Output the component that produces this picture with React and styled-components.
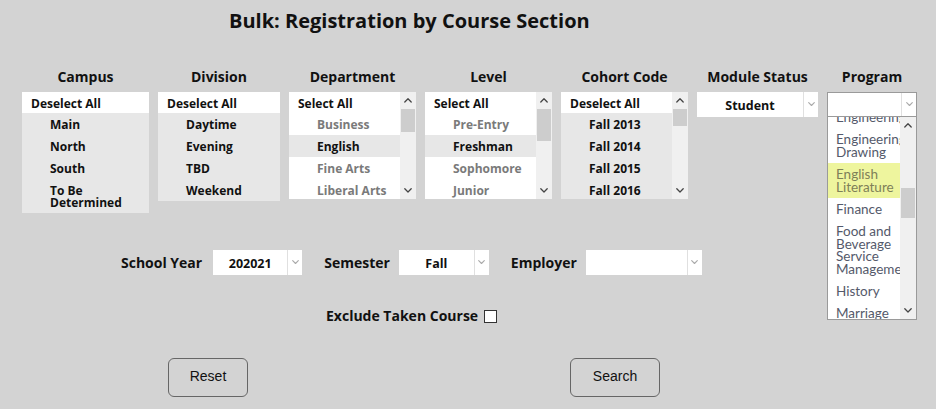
import React from "react";
import styled, { createGlobalStyle } from "styled-components";

const GlobalStyle = createGlobalStyle`
  body {
    margin: 0;
    background: #d3d3d3;
    font-family: "Open Sans", "Lato", sans-serif;
    color: #111;
  }
`;

const columns = [
  {
    title: "Campus",
    width: 127,
    tone: "gray",
    head: "Deselect All",
    items: [{ label: "Main" }, { label: "North" }, { label: "South" }, { label: "To Be Determined" }],
  },
  {
    title: "Division",
    width: 122,
    tone: "gray",
    head: "Deselect All",
    items: [{ label: "Daytime" }, { label: "Evening" }, { label: "TBD" }, { label: "Weekend" }],
  },
  {
    title: "Department",
    width: 127,
    tone: "white",
    head: "Select All",
    thumb: [17, 23],
    items: [
      { label: "Business", muted: true },
      { label: "English", selected: true },
      { label: "Fine Arts", muted: true },
      { label: "Liberal Arts", muted: true },
    ],
  },
  {
    title: "Level",
    width: 127,
    tone: "white",
    head: "Select All",
    thumb: [17, 32],
    items: [
      { label: "Pre-Entry", muted: true },
      { label: "Freshman", selected: true },
      { label: "Sophomore", muted: true },
      { label: "Junior", muted: true },
    ],
  },
  {
    title: "Cohort Code",
    width: 127,
    tone: "gray",
    head: "Deselect All",
    thumb: [17, 17],
    items: [{ label: "Fall 2013" }, { label: "Fall 2014" }, { label: "Fall 2015" }, { label: "Fall 2016" }],
  },
];

const programs = [
  "Engineering",
  "Engineering Drawing",
  "English Literature",
  "Finance",
  "Food and Beverage Service Management",
  "History",
  "Marriage and Family",
];

const Chevron = ({ up, color = "#aaa", size = 7 }) => (
  <svg width={size} height={size * 0.6} viewBox="0 0 10 6" fill="none">
    <path
      d={up ? "M1 5 L5 1 L9 5" : "M1 1 L5 5 L9 1"}
      stroke={color}
      strokeWidth="1.6"
      strokeLinecap="round"
      strokeLinejoin="round"
    />
  </svg>
);

const ScrollBar = ({ thumb, height }) => (
  <Track style={{ height }}>
    <ArrowCell>
      <Chevron up color="#444" size={8} />
    </ArrowCell>
    <Thumb style={{ marginTop: thumb[0] - 17, height: thumb[1] }} />
    <Spacer />
    <ArrowCell>
      <Chevron color="#444" size={8} />
    </ArrowCell>
  </Track>
);

const Select = ({ value, width, bordered }) => (
  <SelectBox $width={width} $bordered={bordered}>
    <SelectValue>{value}</SelectValue>
    <SelectArrow>
      <Chevron />
    </SelectArrow>
  </SelectBox>
);

const App = () => {
  return (
    <Page>
      <GlobalStyle />
      <Title>Bulk: Registration by Course Section</Title>

      <Columns>
        {columns.map((col) => (
          <Column key={col.title} $width={col.width}>
            <ColumnTitle>{col.title}</ColumnTitle>
            <ListBox $tone={col.tone} $scroll={!!col.thumb}>
              <ListBody>
                <HeadItem>{col.head}</HeadItem>
                {col.items.map((it) => (
                  <Item key={it.label} $muted={it.muted} $selected={it.selected}>
                    {it.label}
                  </Item>
                ))}
              </ListBody>
              {col.thumb && <ScrollBar thumb={col.thumb} height={107} />}
            </ListBox>
          </Column>
        ))}

        <Column $width={121}>
          <ColumnTitle>Module Status</ColumnTitle>
          <Select value="Student" width={121} />
        </Column>

        <Column $width={90}>
          <ColumnTitle>Program</ColumnTitle>
          <DropHolder>
            <Select value="" width={90} bordered />
            <DropList>
              <DropItems>
                {programs.map((p) => (
                  <DropItem key={p} $active={p === "English Literature"}>
                    {p}
                  </DropItem>
                ))}
              </DropItems>
              <DropScroll>
                <ArrowCell>
                  <Chevron up color="#444" size={8} />
                </ArrowCell>
                <Thumb style={{ marginTop: 54, height: 30 }} />
                <Spacer />
                <ArrowCell>
                  <Chevron color="#444" size={8} />
                </ArrowCell>
              </DropScroll>
            </DropList>
          </DropHolder>
        </Column>
      </Columns>

      <FilterRow>
        <Field>
          <FieldLabel>School Year</FieldLabel>
          <Select value="202021" width={89} />
        </Field>
        <Field>
          <FieldLabel>Semester</FieldLabel>
          <Select value="Fall" width={90} />
        </Field>
        <Field>
          <FieldLabel>Employer</FieldLabel>
          <Select value="" width={116} />
        </Field>
      </FilterRow>

      <ExcludeRow>
        <FieldLabel>Exclude Taken Course</FieldLabel>
        <CheckBox />
      </ExcludeRow>

      <ButtonRow>
        <Button $width={80}>Reset</Button>
        <Button $width={90}>Search</Button>
      </ButtonRow>
    </Page>
  );
};

const Page = styled.div`
  width: 936px;
  height: 409px;
  padding-top: 9px;
  box-sizing: border-box;
  overflow: hidden;
`;

const Title = styled.h1`
  margin: 0 0 0 229px;
  font-size: 20px;
  line-height: 24px;
  font-weight: 700;
  color: #111;
`;

const Columns = styled.div`
  display: flex;
  align-items: flex-start;
  gap: 9px;
  padding-left: 22px;
  margin-top: 36px;
`;

const Column = styled.div`
  width: ${({ $width }) => $width}px;
  display: flex;
  flex-direction: column;
  align-items: center;
`;

const ColumnTitle = styled.div`
  font-size: 14px;
  line-height: 16px;
  font-weight: 700;
  white-space: nowrap;
  margin-bottom: 7px;
`;

const ListBox = styled.div`
  width: 100%;
  display: flex;
  background: ${({ $tone }) => ($tone === "gray" ? "#e7e7e7" : "#ffffff")};
  ${({ $scroll }) => $scroll && "height: 107px; overflow: hidden;"}
`;

const ListBody = styled.div`
  flex: 1;
  min-width: 0;
`;

const HeadItem = styled.div`
  background: #fff;
  font-size: 12px;
  font-weight: 700;
  line-height: 21px;
  padding: 1px 0 0 9px;
  height: 21px;
  box-sizing: border-box;
  white-space: nowrap;
`;

const Item = styled.div`
  font-size: 12px;
  font-weight: 700;
  line-height: 12px;
  padding: 6px 6px 4px 28px;
  min-height: 12px;
  color: ${({ $muted }) => ($muted ? "#7a7a7a" : "#111")};
  background: ${({ $selected }) => ($selected ? "#e7e7e7" : "transparent")};
`;

const Track = styled.div`
  width: 16px;
  flex: none;
  background: #f0f0f0;
  display: flex;
  flex-direction: column;
`;

const ArrowCell = styled.div`
  height: 17px;
  flex: none;
  display: flex;
  align-items: center;
  justify-content: center;
`;

const Thumb = styled.div`
  flex: none;
  margin: 0 1px;
  background: #cdcdcd;
`;

const Spacer = styled.div`
  flex: 1;
`;

const SelectBox = styled.div`
  width: ${({ $width }) => $width}px;
  height: 25px;
  box-sizing: border-box;
  background: #fff;
  display: flex;
  border: ${({ $bordered }) => ($bordered ? "1px solid #9a9a9a" : "none")};
`;

const SelectValue = styled.div`
  flex: 1;
  font-size: 12.5px;
  font-weight: 700;
  display: flex;
  align-items: center;
  justify-content: center;
  padding-top: 1px;
`;

const SelectArrow = styled.div`
  width: 14px;
  flex: none;
  border-left: 1px solid #e0e0e0;
  display: flex;
  align-items: center;
  justify-content: center;
`;

const DropHolder = styled.div`
  position: relative;
`;

const DropList = styled.div`
  position: absolute;
  top: 25px;
  left: 0;
  width: 90px;
  height: 203px;
  box-sizing: border-box;
  background: #fff;
  border: 1px solid #9a9a9a;
  border-top: none;
  display: flex;
  overflow: hidden;
  z-index: 2;
`;

const DropItems = styled.div`
  flex: 1;
  min-width: 0;
  overflow: hidden;
  margin-top: -11px;
`;

const DropItem = styled.div`
  font-family: "Lato", sans-serif;
  font-size: 13.5px;
  font-weight: 400;
  line-height: 12.4px;
  padding: 5px 0 5px 8px;
  white-space: normal;
  overflow: hidden;
  color: ${({ $active }) => ($active ? "#7e8058" : "#54596a")};
  background: ${({ $active }) => ($active ? "#eef59e" : "transparent")};
`;

const DropScroll = styled(Track)`
  height: 100%;
`;

const FilterRow = styled.div`
  display: flex;
  align-items: center;
  gap: 22px;
  padding-left: 121px;
  margin-top: 37px;
`;

const Field = styled.div`
  display: flex;
  align-items: center;
  gap: 9px;
  &:first-child {
    gap: 11px;
  }
`;

const FieldLabel = styled.span`
  font-size: 14px;
  font-weight: 700;
  white-space: nowrap;
`;

const ExcludeRow = styled.div`
  display: flex;
  align-items: center;
  gap: 6px;
  padding-left: 326px;
  margin-top: 32px;
  height: 16px;
`;

const CheckBox = styled.span`
  width: 13px;
  height: 13px;
  box-sizing: border-box;
  border: 1px solid #333;
  background: #fff;
  margin-top: 3px;
`;

const ButtonRow = styled.div`
  display: flex;
  gap: 322px;
  padding-left: 168px;
  margin-top: 35px;
`;

const Button = styled.button`
  width: ${({ $width }) => $width}px;
  height: 39px;
  padding: 0 0 3px;
  background: transparent;
  border: 1px solid #666;
  border-radius: 6px;
  font-family: "Liberation Sans", Arial, sans-serif;
  font-size: 14px;
  color: #111;
  cursor: pointer;
`;

export default App;
